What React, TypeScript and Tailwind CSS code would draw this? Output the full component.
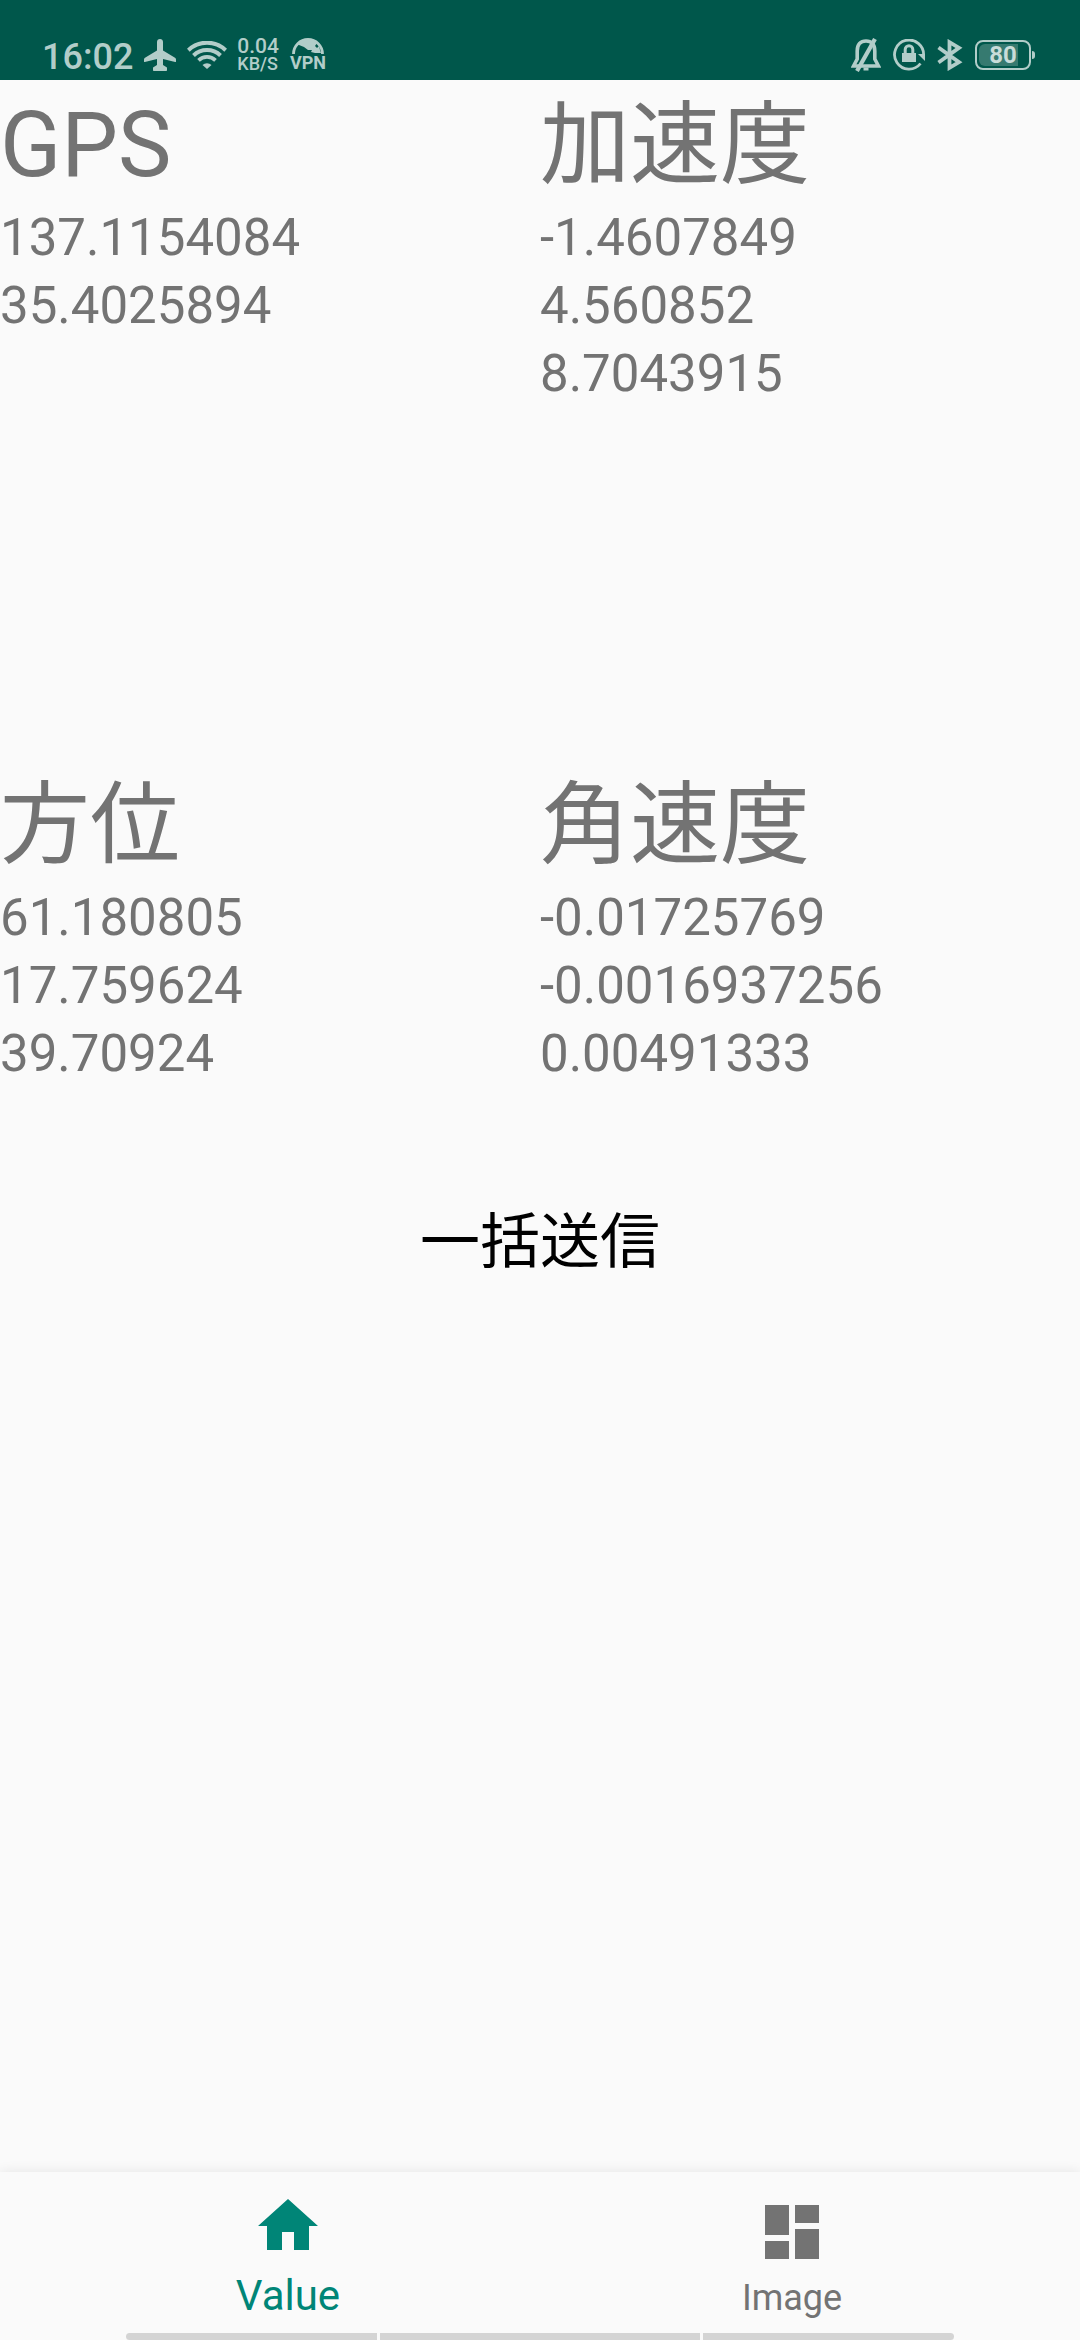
import React from "react";

type Reading = { title: string; values: string[] };

const readings: Reading[] = [
  { title: "GPS", values: ["137.1154084", "35.4025894"] },
  { title: "加速度", values: ["-1.4607849", "4.560852", "8.7043915"] },
  { title: "方位", values: ["61.180805", "17.759624", "39.70924"] },
  { title: "角速度", values: ["-0.01725769", "-0.0016937256", "0.00491333"] },
];

function AirplaneIcon() {
  return (
    <svg className="h-8 w-8" viewBox="0 0 32 32" fill="currentColor" aria-hidden="true">
      <path d="M16 0c-1.800 0-3 1.300-3 3v8.500L1 18.700c-.7.400-1 1-1 1.700v2c0 .5.400.8.900.6L13 20v6l-3.600 2.200c-.3.200-.4.500-.4.900V31c0 .6.400 1 1 1h12c.600 0 1-.4 1-1v-1.900c0-.4-.1-.7-.4-.9L19 26v-6l12.100 3c.5.200.9-.1.9-.6v-2c0-.7-.3-1.300-1-1.700l-12-7.200V3c0-1.700-1.200-3-3-3z" />
    </svg>
  );
}

function WifiIcon() {
  return (
    <svg className="h-7 w-10" viewBox="0 0 40 28" fill="none" stroke="currentColor" aria-hidden="true">
      <path d="M1.300 9.200A27 27 0 0 1 38.700 9.200" strokeWidth="4" />
      <path d="M6.500 14.500A19.500 19.500 0 0 1 33.500 14.500" strokeWidth="4" />
      <path d="M11.500 19.300A12.500 12.500 0 0 1 28.500 19.300" strokeWidth="3.800" />
      <path d="M20 28l-4.500-4a6.500 6.500 0 0 1 9 0z" fill="currentColor" stroke="none" />
    </svg>
  );
}

function VpnArcIcon() {
  return (
    <svg className="h-4 w-8" viewBox="0 0 32 16" aria-hidden="true">
      <path d="M1.500 16A14.500 14.500 0 0 1 30.500 16" fill="none" stroke="currentColor" strokeWidth="2.800" />
      <path d="M5 6L11 1.500h10L25 5l-2 3 2 2 2-2 1 4 1 3h-6l-4-1 1-2-4 0-4-3-5-2z" fill="currentColor" />
    </svg>
  );
}

function SilentIcon() {
  return (
    <svg className="h-[34px] w-[30px]" viewBox="0 0 30 34" fill="none" stroke="currentColor" strokeWidth="3.600" aria-hidden="true">
      <path d="M2.500 28h25l-3.700-7V13C23.800 6.500 20.500 3 15 3S6.200 6.500 6.200 13v8z" />
      <path d="M24 1L6 33" strokeWidth="4.200" />
      <path d="M12.500 31h5" strokeWidth="3" />
    </svg>
  );
}

function RotationLockIcon() {
  return (
    <svg className="h-8 w-8" viewBox="0 0 32 32" fill="none" stroke="currentColor" aria-hidden="true">
      <path d="M27.500 24.500A14.500 14.500 0 1 1 30.500 17" strokeWidth="2.800" />
      <path d="M25 15h7v7z" fill="currentColor" stroke="none" />
      <rect x="9" y="14" width="14" height="9" fill="currentColor" stroke="none" />
      <path d="M12.200 14v-3.500a3.800 3.800 0 0 1 7.600 0V14" strokeWidth="3" />
    </svg>
  );
}

function BluetoothIcon() {
  return (
    <svg className="h-8 w-[26px]" viewBox="0 0 26 32" fill="none" stroke="currentColor" strokeWidth="3.800" aria-hidden="true">
      <path d="M1.500 8.500L22 23.200 12.500 28.800V3.200L22 8.800 1.500 23.500" />
    </svg>
  );
}

function StatusBar() {
  return (
    <header className="flex h-20 items-end justify-between bg-[#00574b] pr-[45px] pl-[42px] text-[#b2cdc9]">
      <div className="flex h-[50px] items-center">
        <time className="pt-1 text-[36px] leading-[46px] font-medium">16:02</time>
        <span className="ml-[11px]"><AirplaneIcon /></span>
        <span className="ml-[11px]"><WifiIcon /></span>
        <div className="ml-[10px] flex flex-col font-medium">
          <span className="text-[21px] leading-[17px]">0.04</span>
          <span className="text-[18px] leading-[17px]">KB/S</span>
        </div>
        <div className="ml-[11px] flex flex-col items-center">
          <VpnArcIcon />
          <span className="text-[18px] leading-[18px] font-bold">VPN</span>
        </div>
      </div>
      <div className="flex h-[50px] items-center">
        <SilentIcon />
        <span className="ml-3"><RotationLockIcon /></span>
        <span className="ml-3"><BluetoothIcon /></span>
        <div className="ml-3 flex items-center">
          <div className="h-[30px] w-14 rounded-lg border-2 border-current p-[2px]">
            <div className="h-full w-[39px] rounded-l-[6px] bg-[#367a70]">
              <span className="block w-12 text-center text-[24px] leading-[22px] font-bold text-[#c8dcd9]">80</span>
            </div>
          </div>
          <div className="ml-px h-2 w-[3px] rounded-r bg-current" />
        </div>
      </div>
    </header>
  );
}

function ReadingPanel({ title, values }: Reading) {
  return (
    <section>
      <h2 className="pt-[11px] pb-[3px] text-[90px] leading-[110px]">{title}</h2>
      {values.map((value) => (
        <p key={value} className="text-[51px] leading-[68px]">{value}</p>
      ))}
    </section>
  );
}

function BottomNav() {
  return (
    <nav className="bg-[#fafafa] shadow-[0_0_12px_rgba(0,0,0,0.09)]">
      <div className="mx-auto flex h-[161px] max-w-[1008px]">
        <button type="button" aria-current="page" className="flex flex-1 flex-col items-center pt-[18px] text-[#008577]">
          <svg className="size-[72px]" viewBox="0 0 24 24" fill="currentColor" aria-hidden="true">
            <path d="M10 20v-6h4v6h5v-8h3L12 3 2 12h3v8z" />
          </svg>
          <span className="mt-2 text-[42px] leading-[52px]">Value</span>
        </button>
        <button type="button" className="flex flex-1 flex-col items-center pt-6 text-[#737373]">
          <svg className="size-[72px]" viewBox="0 0 24 24" fill="currentColor" aria-hidden="true">
            <path d="M3 13h8V3H3v10zm0 8h8v-6H3v6zm10 0h8V11h-8v10zm0-18v6h8V3h-8z" />
          </svg>
          <span className="mt-1 text-[36px] leading-[52px]">Image</span>
        </button>
      </div>
      <div className="mx-auto flex h-[7px] w-[828px] max-w-full gap-[3px]">
        <div className="w-[251px] rounded-l bg-[#d4d4d4]" />
        <div className="flex-1 bg-[#d4d4d4]" />
        <div className="w-[251px] rounded-r bg-[#d4d4d4]" />
      </div>
    </nav>
  );
}

export default function App() {
  return (
    <div lang="ja" className="flex min-h-screen flex-col bg-[#fafafa] font-['Roboto','Noto_Sans_CJK_JP',sans-serif] text-[#737373]">
      <StatusBar />
      <main className="flex-1">
        <div className="grid grid-cols-2 gap-y-[352px]">
          {readings.map((reading) => (
            <ReadingPanel key={reading.title} {...reading} />
          ))}
        </div>
        <button type="button" className="mt-[83px] w-full py-8 text-center text-[60px] leading-[80px] text-black">
          一括送信
        </button>
      </main>
      <BottomNav />
    </div>
  );
}
